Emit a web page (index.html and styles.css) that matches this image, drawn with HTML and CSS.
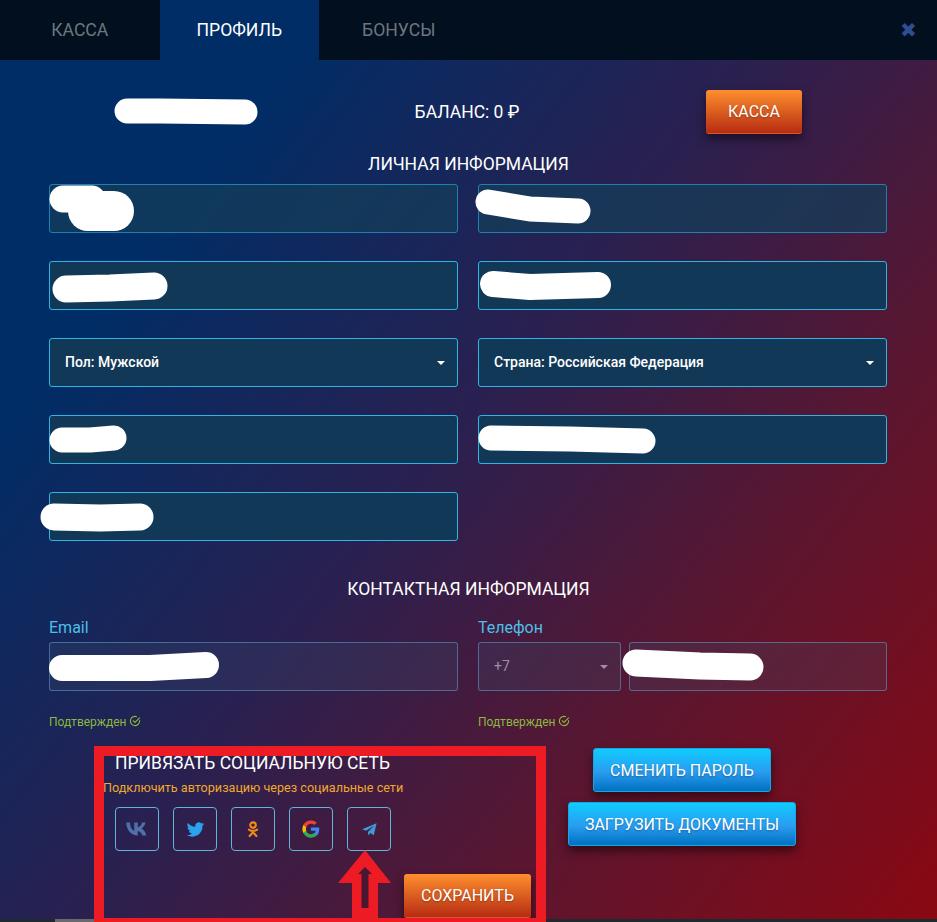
FILE: index.html
```html
<!DOCTYPE html>
<html lang="ru">
<head>
    <meta charset="UTF-8">
    <meta name="viewport" content="width=device-width, initial-scale=1.0">
    <title>Профиль</title>
    <link rel="stylesheet" href="styles.css">
</head>
<body>
    <div class="modal">
        <div class="tabs">
            <a class="tab">КАССА</a>
            <a class="tab active">ПРОФИЛЬ</a>
            <a class="tab">БОНУСЫ</a>
            <span class="close">✖</span>
        </div>

        <div class="balance-row">
            <div class="user-name"></div>
            <div class="balance">БАЛАНС: 0 ₽</div>
            <div class="balance-action"><button class="btn btn-orange btn-cash">КАССА</button></div>
        </div>

        <h3 class="section-title first">ЛИЧНАЯ ИНФОРМАЦИЯ</h3>
        <div class="fields">
            <div class="field muted"></div>
            <div class="field muted"></div>
            <div class="field"></div>
            <div class="field"></div>
            <div class="field">Пол: Мужской<span class="caret"></span></div>
            <div class="field">Страна: Российская Федерация<span class="caret"></span></div>
            <div class="field"></div>
            <div class="field"></div>
            <div class="field"></div>
        </div>

        <h3 class="section-title second">КОНТАКТНАЯ ИНФОРМАЦИЯ</h3>
        <div class="contacts">
            <div>
                <label class="contact-label">Email</label>
                <div class="field dim"></div>
                <div class="confirmed">Подтвержден
                    <svg class="check" viewBox="0 0 12 12"><path d="M10.6 5.2v.8a4.6 4.6 0 1 1-2.7-4.2"/><path d="M3.9 5.4 6 7.5l4.8-4.8"/></svg>
                </div>
            </div>
            <div>
                <label class="contact-label">Телефон</label>
                <div class="phone">
                    <div class="field dim code">+7<span class="caret"></span></div>
                    <div class="field dim number"></div>
                </div>
                <div class="confirmed">Подтвержден
                    <svg class="check" viewBox="0 0 12 12"><path d="M10.6 5.2v.8a4.6 4.6 0 1 1-2.7-4.2"/><path d="M3.9 5.4 6 7.5l4.8-4.8"/></svg>
                </div>
            </div>
        </div>

        <div class="bottom">
            <div class="social">
                <h4 class="social-title">ПРИВЯЗАТЬ СОЦИАЛЬНУЮ СЕТЬ</h4>
                <p class="social-hint">Подключить авторизацию через социальные сети</p>
                <div class="social-list">
                    <a class="social-btn">
                        <svg viewBox="0 0 24 24" width="26" height="26"><path fill="#4f71a8" d="M13 18C6.6 18 2.6 13.500 2 6h3.500c.2 5 2.300 7.100 4 7.600V6h3.200v4.300c1.700-.2 3.400-2.100 4-4.300h3.200c-.5 2.700-2.400 4.700-3.800 5.500 1.400.7 3.600 2.400 4.500 6.500h-3.600c-.7-2.300-2.500-4-4.300-4.200V18z"/></svg>
                    </a>
                    <a class="social-btn">
                        <svg viewBox="0 0 24 24" width="19" height="19"><path fill="#2aa3ef" d="M23 5.200c-.8.400-1.700.6-2.600.7.900-.6 1.600-1.400 2-2.500-.9.500-1.800.9-2.900 1.100a4.500 4.500 0 0 0-7.700 4.100C8.100 8.400 4.800 6.700 2.500 3.900a4.500 4.500 0 0 0 1.400 6c-.7 0-1.400-.2-2-.6 0 2.200 1.500 4 3.600 4.500-.7.200-1.400.2-2 .1.600 1.800 2.200 3.100 4.200 3.100A9 9 0 0 1 1 18.900 12.800 12.800 0 0 0 20.700 7.500c.9-.6 1.700-1.400 2.300-2.300z"/></svg>
                    </a>
                    <a class="social-btn">
                        <svg viewBox="0 0 24 24" width="18" height="18" fill="none" stroke="#f08a18" stroke-width="2.800"><circle cx="12" cy="6.800" r="3.700"/><path stroke-linecap="round" d="M6.500 12.700c3.500 2.300 7.500 2.300 11 0M12 15v1.200M7.500 21.300l4.500-5 4.500 5"/></svg>
                    </a>
                    <a class="social-btn">
                        <svg viewBox="0 0 24 24" width="18" height="18"><path fill="#4285f4" d="M23 12.300c0-.8-.1-1.600-.2-2.300H12v4.400h6.200a5.300 5.300 0 0 1-2.300 3.500v2.900h3.700c2.100-2 3.400-4.900 3.400-8.500z"/><path fill="#34a853" d="M12 23.500c3.100 0 5.700-1 7.600-2.800l-3.700-2.900c-1 .7-2.300 1.100-3.900 1.100-3 0-5.500-2-6.400-4.700H1.800v3c1.900 3.800 5.800 6.300 10.200 6.300z"/><path fill="#fbbc05" d="M5.600 14.200a7 7 0 0 1 0-4.400v-3H1.800a11.500 11.500 0 0 0 0 10.400z"/><path fill="#ea4335" d="M12 5.100c1.700 0 3.200.6 4.400 1.700l3.300-3.300A11.500 11.500 0 0 0 1.800 6.800l3.800 3C6.500 7.100 9 5.100 12 5.100z"/></svg>
                    </a>
                    <a class="social-btn">
                        <svg viewBox="0 0 24 24" width="17" height="17"><path fill="#3e9bd6" d="M22 3 1.500 11.500l5.700 2.200L19 6.500l-9 8.500v5.500l3.200-3.700 4.800 3.400z"/></svg>
                    </a>
                </div>
                <div class="save-row"><button class="btn btn-orange btn-save">СОХРАНИТЬ</button></div>
            </div>
            <div class="actions">
                <button class="btn btn-blue btn-pass">СМЕНИТЬ ПАРОЛЬ</button>
                <button class="btn btn-blue btn-docs">ЗАГРУЗИТЬ ДОКУМЕНТЫ</button>
            </div>
        </div>

        <div class="footer-strip"><span class="scroll-thumb"></span></div>

        <!-- marks drawn over the screenshot: white scribbles and the red frame with arrow -->
        <svg class="scribbles" viewBox="0 0 937 922" width="937" height="922">
            <path stroke-width="25" d="M127 111H160L245 112"/>
            <path stroke-width="27" d="M63 199H92"/>
            <path stroke-width="40" d="M88 211H114"/>
            <path stroke-width="25" d="M488 202 530 209 578 211"/>
            <path stroke-width="27" d="M66 289 110 288 154 286"/>
            <path stroke-width="26" d="M493 284 530 287 598 285"/>
            <path stroke-width="25" d="M62 440H90L114 438"/>
            <path stroke-width="25" d="M491 438 570 439 643 441"/>
            <path stroke-width="27" d="M54 517 100 518 140 517"/>
            <path stroke-width="26" d="M62 668H150L206 665"/>
            <path stroke-width="27" d="M636 663 700 666 750 667"/>
        </svg>
        <div class="markup-box"></div>
        <svg class="markup-arrow" viewBox="0 0 54 68" width="54" height="68"><path fill="#ed1c24" d="M27 0 53 33H40V68H14V33H0z"/><path fill="#4a1733" d="M27 17 34 24H30.500V58H23.500V24H20z"/></svg>
    </div>
</body>
</html>
```

FILE: styles.css
```css
* { box-sizing: border-box; }
html, body { margin: 0; height: 100%; }
body {
    font-family: Roboto, "Liberation Sans", sans-serif;
    color: #fff;
    overflow: hidden;
}
.modal {
    position: relative;
    width: 937px;
    height: 922px;
    overflow: hidden;
    background: linear-gradient(128deg, #002d66 0%, #002d66 20%, #2a2050 48%, #5a1630 72%, #8a0812 100%);
}

/* tabs */
.tabs { display: flex; align-items: center; height: 60px; background: #020f1e; }
.tab {
    display: flex; align-items: center; justify-content: center;
    width: 159.500px; height: 60px;
    font-size: 17.600px; color: #6d7680;
}
.tab.active { background: #002d66; color: #fff; }
.close { margin-left: auto; margin-right: 20px; font-size: 20px; color: #2d4e90; }

/* balance */
.balance-row { display: flex; align-items: center; height: 44px; margin-top: 30px; }
.user-name { width: 380px; height: 44px; }
.balance { width: 176px; text-align: center; font-size: 17.500px; margin-left: -1px; }
.balance-action { margin-left: 151px; }

.btn {
    height: 44px; padding: 0;
    border: none; border-radius: 3px;
    font: 400 16px Roboto, "Liberation Sans", sans-serif;
    color: #fff; cursor: pointer;
    text-shadow: 0 1px 2px rgba(0, 0, 0, 0.3);
    box-shadow: 0 5px 10px rgba(0, 0, 0, 0.5);
}
.btn-orange { background: linear-gradient(#ff8f2e, #b62c12); border-bottom: 1px solid #e0542a; }
.btn-blue { background: linear-gradient(#10ccff, #2a9cf0 55%, #0070c0); border: 1px solid #10a8e8; }
.btn-cash { width: 96px; }
.btn-save { width: 127px; }
.btn-pass { width: 178px; }
.btn-docs { width: 228px; }

.section-title { margin: 0; text-align: center; font-size: 17.500px; font-weight: 400; line-height: 22px; }
.section-title.first { margin-top: 19px; }
.section-title.second { margin-top: 37px; }

/* fields */
.fields {
    display: grid;
    grid-template-columns: 409px 409px;
    gap: 28px 20px;
    margin: 9px 0 0 49px;
}
.field {
    position: relative;
    display: flex; align-items: center;
    height: 49px; padding: 0 15px 2px;
    background: #123857;
    border: 1px solid #2fb4e4;
    border-radius: 3px;
    font-size: 14px; font-weight: 500;
}
.field.muted { background: rgba(20, 62, 90, 0.75); border-color: #2280b0; }
.caret {
    position: absolute; right: 12px; top: 22px;
    border: 4px solid transparent; border-top-color: #fff; border-bottom: 0;
}

/* contacts */
.contacts {
    display: grid;
    grid-template-columns: 409px 409px;
    gap: 20px;
    margin: 17px 0 0 49px;
}
.contact-label { display: block; height: 22px; font-size: 16px; line-height: 22px; color: #4fbfe6; }
.field.dim { margin-top: 3px; background: rgba(60, 80, 110, 0.25); border-color: rgba(90, 150, 190, 0.6); }
.phone { display: flex; gap: 8px; }
.phone .code { width: 143px; font-weight: 400; color: #9a90a8; }
.phone .code .caret { border-top-color: #9a90a8; }
.phone .number { flex: 1; }
.confirmed { display: flex; align-items: center; gap: 3px; margin-top: 23px; height: 16px; font-size: 12px; color: #8cb83e; }
.check { width: 12px; height: 12px; fill: none; stroke: #8cb83e; stroke-width: 1.100; margin-top: -2px; }

/* bottom */
.bottom { display: flex; margin-top: 18px; }
.social { width: 546px; padding-left: 103px; }
.social-title { margin: 0 0 0 12px; font-size: 17.500px; font-weight: 400; line-height: 22px; padding-top: 4px; height: 26px; white-space: nowrap; }
.social-hint { margin: 6px 0 0; font-size: 12.600px; line-height: 16px; color: #f0a82e; white-space: nowrap; }
.social-list { display: flex; gap: 14px; margin: 11px 0 0 12px; }
.social-btn {
    display: flex; align-items: center; justify-content: center;
    width: 44px; height: 44px;
    border: 1px solid #5fb6d8; border-radius: 4px;
}
.save-row { display: flex; justify-content: flex-end; margin: 23px 0 0; padding-right: 15px; }
.actions { display: flex; flex-direction: column; align-items: center; gap: 10px; width: 228px; margin-left: 22px; }

/* marks over the screenshot */
.scribbles { position: absolute; left: 0; top: 0; fill: none; stroke: #fff; stroke-linecap: round; stroke-linejoin: round; }
.markup-box {
    position: absolute; left: 94px; top: 746px;
    width: 452px; height: 176px;
    border: 10px solid #ed1c24;
    border-bottom-width: 4px;
}
.markup-arrow { position: absolute; left: 338px; top: 850px; }
.footer-strip { position: absolute; left: 0; right: 0; bottom: 0; height: 3px; background: #1f2a30; }
.scroll-thumb { position: absolute; left: 55px; top: 0; width: 300px; height: 3px; background: #6a6a6a; }
```
